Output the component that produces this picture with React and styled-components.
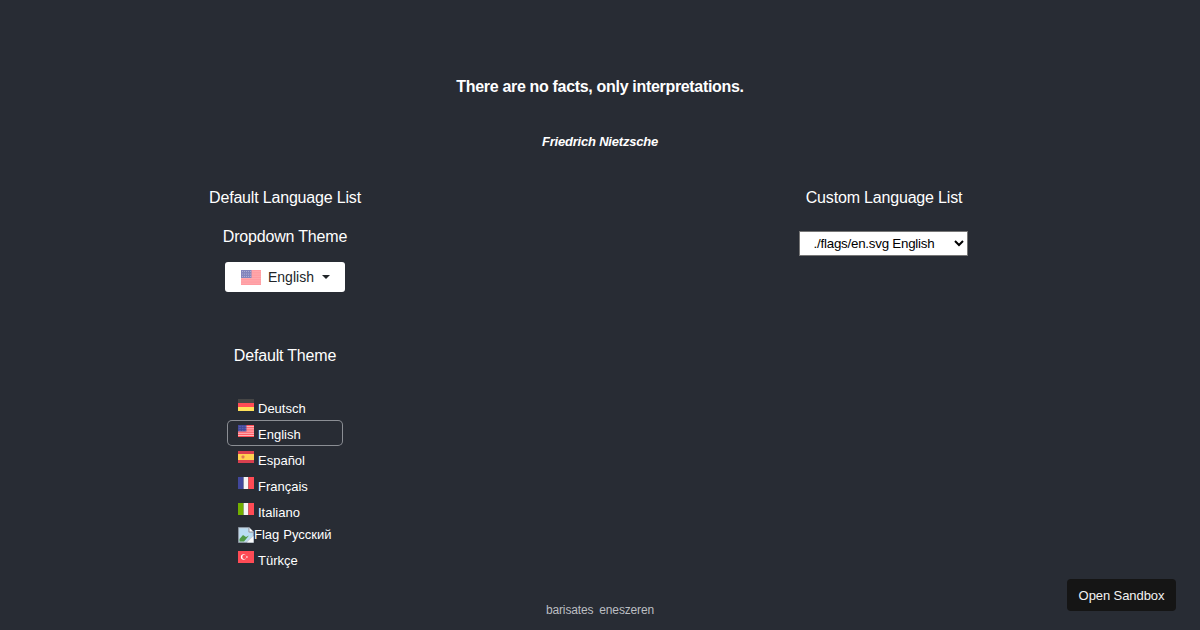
import React from "react";
import styled, { createGlobalStyle } from "styled-components";

const GlobalStyle = createGlobalStyle`
  html, body {
    margin: 0;
    background: #282c34;
    font-family: "Liberation Sans", Arial, sans-serif;
  }
`;

const languages = [
  { code: "de", name: "Deutsch" },
  { code: "en", name: "English", active: true },
  { code: "es", name: "Español" },
  { code: "fr", name: "Français" },
  { code: "it", name: "Italiano" },
  { code: "ru", name: "Русский", broken: true },
  { code: "tr", name: "Türkçe" },
];

const UsFlag = ({ stripe, canton }) => (
  <>
    <rect width="20" height="15" fill="#ff4b55" />
    {[1.2, 3.5, 5.8, 8.1, 10.4, 12.7].map((y) => (
      <rect key={y} y={y} width="20" height="1" fill="#fff" opacity={stripe} />
    ))}
    <rect width="10.5" height="8" fill={canton} />
    {[1.5, 3.5, 5.5, 7.5, 9.5].map((x) =>
      [1.5, 4, 6.5].map((y) => (
        <circle key={`${x}-${y}`} cx={x} cy={y} r="0.5" fill="#fff" opacity="0.45" />
      ))
    )}
  </>
);

const flagShapes = {
  de: (
    <>
      <rect width="20" height="5" fill="#464646" />
      <rect y="5" width="20" height="5" fill="#ff4b55" />
      <rect y="10" width="20" height="5" fill="#ffe15a" />
    </>
  ),
  es: (
    <>
      <rect width="20" height="15" fill="#d8404f" />
      <rect y="3.75" width="20" height="7.5" fill="#ffd250" />
      <rect x="4.5" y="5.5" width="3.5" height="4" rx="1" fill="#e07a55" />
    </>
  ),
  fr: (
    <>
      <rect width="7" height="15" fill="#41479b" />
      <rect x="7" width="6" height="15" fill="#f5f5f5" />
      <rect x="13" width="7" height="15" fill="#ff4b55" />
    </>
  ),
  it: (
    <>
      <rect width="7" height="15" fill="#73af00" />
      <rect x="7" width="6" height="15" fill="#f5f5f5" />
      <rect x="13" width="7" height="15" fill="#ff4b55" />
    </>
  ),
  tr: (
    <>
      <rect width="20" height="15" fill="#ff4b55" />
      <circle cx="7" cy="7.5" r="3.4" fill="#fff" />
      <circle cx="8" cy="7.5" r="2.7" fill="#ff4b55" />
      <circle cx="11.2" cy="7.5" r="1" fill="#fff" />
    </>
  ),
};

const Flag = ({ code, large }) => (
  <FlagSvg viewBox="0 0 20 15" $large={large} aria-hidden="true">
    {code === "en" ? (
      <UsFlag stripe={large ? 0.15 : 0.75} canton={large ? "#1d2288" : "#41479b"} />
    ) : (
      flagShapes[code]
    )}
  </FlagSvg>
);

const BrokenImage = () => (
  <BrokenSvg viewBox="0 0 16 16" aria-hidden="true">
    <path d="M0.5 0.5H11L15.5 5V15.5H0.5Z" fill="#c3d0dc" stroke="#8b95a1" />
    <path d="M11 0.5V5H15.5" fill="#fff" stroke="#8b95a1" />
    <path d="M1.5 1.5H10V6H14.5V9L8 14.5H1.5Z" fill="#b9dcf2" />
    <path d="M1.5 12L5 8L8 10L11 8.5L6 14.5H1.5Z" fill="#4f9a45" />
    <path d="M15.5 9L9 15.5H15.5Z" fill="#fff" opacity="0.9" />
  </BrokenSvg>
);

const App = () => (
  <>
    <GlobalStyle />
    <Page>
      <Quote>There are no facts, only interpretations.</Quote>
      <Author>Friedrich Nietzsche</Author>
      <Columns>
        <LeftColumn>
          <Heading>Default Language List</Heading>
          <DropdownHeading>Dropdown Theme</DropdownHeading>
          <DropdownButton>
            <Flag code="en" large />
            <span>English</span>
            <Caret />
          </DropdownButton>
          <DefaultHeading>Default Theme</DefaultHeading>
          <LangList>
            {languages.map((lang) => (
              <LangRow key={lang.code} $active={lang.active} $broken={lang.broken}>
                {lang.broken ? <BrokenImage /> : <Flag code={lang.code} />}
                {lang.broken ? <AltText>Flag</AltText> : null}
                <LangName $broken={lang.broken}>{lang.name}</LangName>
              </LangRow>
            ))}
          </LangList>
        </LeftColumn>
        <RightColumn>
          <Heading>Custom Language List</Heading>
          <NativeSelect defaultValue="en">
            <option value="en">./flags/en.svg English</option>
          </NativeSelect>
        </RightColumn>
      </Columns>
      <Footer>
        <span>barisates</span>
        <span>eneszeren</span>
      </Footer>
      <SandboxButton>Open Sandbox</SandboxButton>
    </Page>
  </>
);

const Page = styled.div`
  position: relative;
  height: 630px;
  overflow: hidden;
  display: flex;
  flex-direction: column;
  align-items: center;
  padding-top: 78px;
  box-sizing: border-box;
  color: #fff;
`;

const Quote = styled.div`
  font-size: 16px;
  line-height: 18px;
  font-weight: 700;
  letter-spacing: -0.32px;
`;

const Author = styled.div`
  margin-top: 37px;
  font-size: 13px;
  line-height: 18px;
  font-weight: 700;
  font-style: italic;
  letter-spacing: -0.2px;
`;

const Columns = styled.div`
  align-self: stretch;
  display: flex;
  margin-top: 37px;
  flex: 1;
`;

const LeftColumn = styled.div`
  width: 570px;
  display: flex;
  flex-direction: column;
  align-items: center;
`;

const RightColumn = styled.div`
  flex: 1;
  padding-right: 2px;
  display: flex;
  flex-direction: column;
  align-items: center;
`;

const Heading = styled.div`
  font-size: 16px;
  line-height: 20px;
  margin-bottom: 19px;
  text-align: center;
  letter-spacing: -0.18px;
`;

const DropdownHeading = styled(Heading)`
  margin-bottom: 15px;
`;

const DefaultHeading = styled(Heading)`
  margin-top: 54px;
  margin-bottom: 28px;
`;

const DropdownButton = styled.div`
  width: 120px;
  height: 30px;
  box-sizing: border-box;
  background: #fff;
  border-radius: 3px;
  color: #212529;
  font-size: 14px;
  display: flex;
  align-items: center;
  padding-left: 16px;
`;

const Caret = styled.i`
  width: 0;
  height: 0;
  margin-left: 8px;
  border-top: 4px solid #212529;
  border-left: 4px solid transparent;
  border-right: 4px solid transparent;
`;

const FlagSvg = styled.svg`
  flex: none;
  display: block;
  width: ${(p) => (p.$large ? "20px" : "16px")};
  height: ${(p) => (p.$large ? "15px" : "12px")};
  margin-right: ${(p) => (p.$large ? "7px" : "4px")};
  margin-top: ${(p) => (p.$large ? "0" : "5px")};
  opacity: ${(p) => (p.$large ? 0.55 : 1)};
  align-self: ${(p) => (p.$large ? "center" : "flex-start")};
`;

const BrokenSvg = styled.svg`
  flex: none;
  display: block;
  width: 16px;
  height: 16px;
  margin-top: 3px;
  align-self: flex-start;
`;

const LangList = styled.div`
  width: 116px;
  display: flex;
  flex-direction: column;
`;

const LangRow = styled.div`
  box-sizing: border-box;
  height: ${(p) => (p.$broken ? "22px" : "26px")};
  padding-left: 11px;
  display: flex;
  align-items: flex-start;
  font-size: 13px;
  border-radius: 5px;
  box-shadow: ${(p) => (p.$active ? "inset 0 0 0 1px #8b8e94" : "none")};
`;

const AltText = styled.span`
  line-height: 15px;
  margin-top: 3px;
`;

const LangName = styled.span`
  line-height: 15px;
  margin-top: ${(p) => (p.$broken ? "3px" : "7px")};
  margin-left: ${(p) => (p.$broken ? "4px" : "0")};
`;

const NativeSelect = styled.select`
  width: 169px;
  height: 25px;
  margin-top: 4px;
  margin-right: 2px;
  padding-right: 6px;
  background-color: #fff;
  color: #000;
  border: 1px solid #767676;
  border-radius: 0;
  font-family: "Liberation Sans", Arial, sans-serif;
  font-size: 13.333px;
  letter-spacing: -0.23px;
  text-align: center;
`;

const Footer = styled.div`
  position: absolute;
  left: 0;
  right: 0;
  bottom: 13px;
  display: flex;
  justify-content: center;
  gap: 6px;
  font-size: 12px;
  line-height: 14px;
  letter-spacing: -0.15px;
  color: #bcbec2;
`;

const SandboxButton = styled.div`
  position: absolute;
  right: 24px;
  bottom: 19px;
  width: 109px;
  height: 32px;
  display: flex;
  align-items: center;
  justify-content: center;
  background: #151515;
  border-radius: 4px;
  color: #f2f2f2;
  font-size: 13px;
  letter-spacing: -0.08px;
`;

export default App;
